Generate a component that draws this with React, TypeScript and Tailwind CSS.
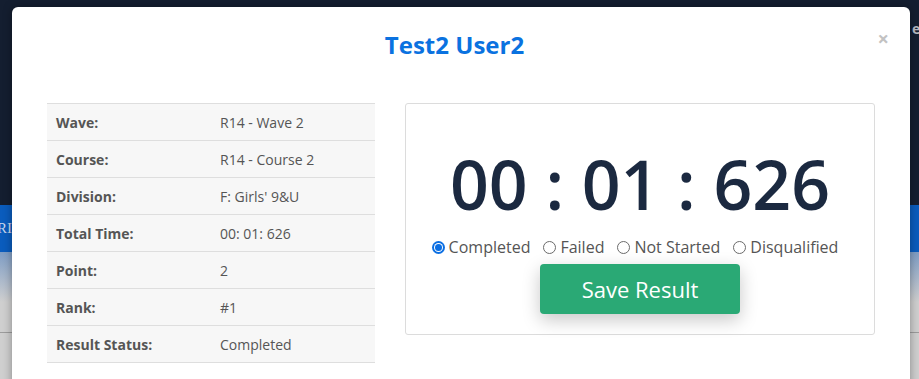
import * as React from 'react';

const ROWS: Array<{ readonly label: string; readonly value: string }> = [
  { label: 'Wave:', value: 'R14 - Wave 2' },
  { label: 'Course:', value: 'R14 - Course 2' },
  { label: 'Division:', value: "F: Girls' 9&U" },
  { label: 'Total Time:', value: '00: 01: 626' },
  { label: 'Point:', value: '2' },
  { label: 'Rank:', value: '#1' },
  { label: 'Result Status:', value: 'Completed' },
];

const STATUSES = ['Completed', 'Failed', 'Not Started', 'Disqualified'];

function Radio(props: { readonly checked: boolean; readonly label: string }): React.ReactNode {
  const { checked, label } = props;
  return (
    <label className="flex items-center gap-[4px]">
      { checked ? (
        <span className="flex h-[13px] w-[13px] items-center justify-center rounded-full bg-[#0b6fe3]">
          <span className="flex h-[9px] w-[9px] items-center justify-center rounded-full bg-white">
            <span className="h-[7px] w-[7px] rounded-full bg-[#0b6fe3]"/>
          </span>
        </span>
      ) : (
        <span className="h-[13px] w-[13px] rounded-full border border-[#6b6b6b] bg-white"/>
      ) }
      <span>{ label }</span>
    </label>
  );
}

export default function App(): React.ReactNode {
  return (
    <div className="relative h-[379px] w-[919px] overflow-hidden font-['Open_Sans',sans-serif]">
      {/* page behind the dimmed overlay */}
      <div className="flex h-full flex-col">
        <div className="relative h-[205px] bg-[#141e30]">
          <span className="absolute left-[912px] top-[18px] text-[14px] font-bold text-[#b9bcc4]">e</span>
        </div>
        <div className="flex h-[47px] items-center bg-[#0a5cbd] font-['Liberation_Serif',serif] text-[15px] text-[#c9d8ee]">
          <span className="ml-[-3px]">RI</span>
        </div>
        <div className="h-[50px] bg-gradient-to-b from-[#7f9dc4] to-[#cfcfcf]"/>
        <div className="h-[31px] border-b border-[#9c9c9c] bg-[#cfcfcf]"/>
        <div className="flex-1 bg-[#cfcfcf]"/>
      </div>

      {/* modal */}
      <div className="absolute left-[12px] top-[7px] h-[400px] w-[898px] rounded-[6px] bg-white shadow-[0_0_10px_rgba(0,0,0,0.35)]">
        <button className="absolute right-[21px] top-[22px] text-[20px] font-bold leading-none text-[#c2c2c2]">×</button>
        <h2 className="pr-[13px] pt-[22px] text-center text-[24px] font-bold leading-[32px] text-[#0a72e0]">Test2 User2</h2>

        <div className="mt-[42px] flex gap-[30px] px-[35px]">
          <div className="w-[328px] border-t border-[#dedede]">
            { ROWS.map((row) => (
              <div
                key={ row.label }
                className="flex h-[37px] items-center border-b border-[#dedede] bg-[#f7f7f7] text-[14px] text-[#555]"
              >
                <span className="w-[173px] pl-[9px] font-bold">{ row.label }</span>
                <span>{ row.value }</span>
              </div>
            )) }
          </div>

          <div className="flex h-[232px] w-[470px] flex-col items-center rounded-[3px] border border-[#dcdcdc] pt-[46px]">
            <div className="text-[68px] font-semibold leading-[68px] text-[#1b2940]">00 : 01 : 626</div>
            <div className="mt-[17px] flex h-[24px] items-center gap-[13px] pr-[10px] text-[16px] text-[#555]">
              { STATUSES.map((status, index) => (
                <Radio key={ status } checked={ index === 0 } label={ status }/>
              )) }
            </div>
            <button className="mt-[5px] h-[50px] w-[200px] rounded-[4px] bg-[#2aa975] text-[22px] text-white shadow-[0_6px_18px_rgba(0,0,0,0.22)]">
              Save Result
            </button>
          </div>
        </div>
      </div>
    </div>
  );
}
